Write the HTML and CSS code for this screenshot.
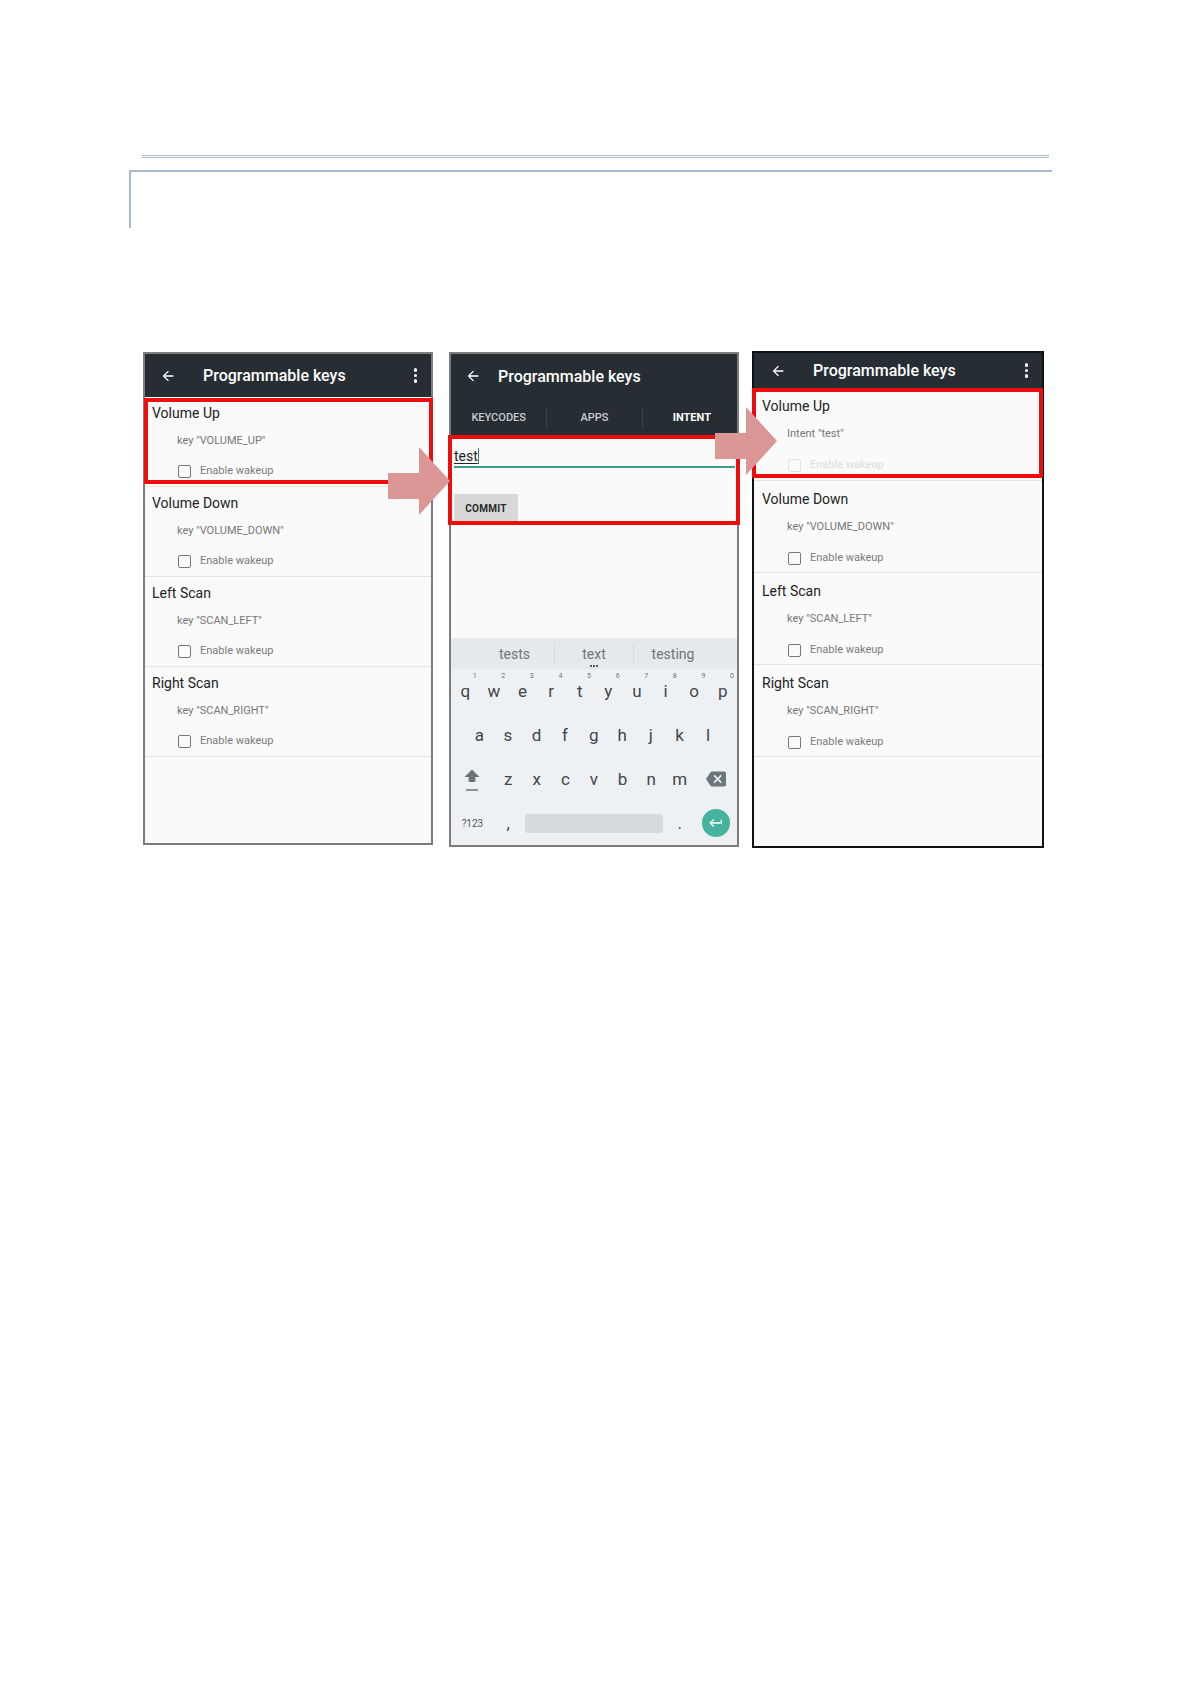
FILE: index.html
```html
<!DOCTYPE html>
<html lang="en">
<head>
    <meta charset="UTF-8">
    <meta name="viewport" content="width=device-width, initial-scale=1.0">
    <title>Programmable keys</title>
    <link rel="stylesheet" href="styles.css">
</head>
<body>
<div class="page">
    <div class="rule-double"></div>
    <div class="frame"></div>

    <div class="shots">
        <!-- screen 1: key list -->
        <div class="phone phone-a">
            <div class="appbar">
                <svg class="back" viewBox="0 0 24 24"><path d="M20 11H7.83l5.59-5.59L12 4l-8 8 8 8 1.41-1.41L7.83 13H20v-2z"/></svg>
                <span class="title">Programmable keys</span>
                <span class="kebab"><i></i><i></i><i></i></span>
            </div>
            <div class="item">
                <div class="item-title">Volume Up</div>
                <div class="item-sub">key "VOLUME_UP"</div>
                <div class="item-check"><span class="box"></span>Enable wakeup</div>
            </div>
            <div class="item">
                <div class="item-title">Volume Down</div>
                <div class="item-sub">key "VOLUME_DOWN"</div>
                <div class="item-check"><span class="box"></span>Enable wakeup</div>
            </div>
            <div class="item">
                <div class="item-title">Left Scan</div>
                <div class="item-sub">key "SCAN_LEFT"</div>
                <div class="item-check"><span class="box"></span>Enable wakeup</div>
            </div>
            <div class="item">
                <div class="item-title">Right Scan</div>
                <div class="item-sub">key "SCAN_RIGHT"</div>
                <div class="item-check"><span class="box"></span>Enable wakeup</div>
            </div>
        </div>

        <!-- screen 2: intent entry -->
        <div class="phone phone-b">
            <div class="appbar appbar-tall">
                <div class="appbar-row">
                    <svg class="back" viewBox="0 0 24 24"><path d="M20 11H7.83l5.59-5.59L12 4l-8 8 8 8 1.41-1.41L7.83 13H20v-2z"/></svg>
                    <span class="title">Programmable keys</span>
                </div>
                <div class="tabs">
                    <span class="tab">KEYCODES</span>
                    <span class="tab">APPS</span>
                    <span class="tab tab-on">INTENT</span>
                </div>
            </div>
            <div class="form">
                <div class="field"><span class="typed">test</span><span class="cursor"></span></div>
                <div class="commit">COMMIT</div>
            </div>
            <div class="keyboard">
                <div class="suggest">
                    <span>tests</span>
                    <span class="picked">text</span>
                    <span>testing</span>
                </div>
                <div class="krow krow-top">
                    <span class="key">q<sup>1</sup></span>
                    <span class="key">w<sup>2</sup></span>
                    <span class="key">e<sup>3</sup></span>
                    <span class="key">r<sup>4</sup></span>
                    <span class="key">t<sup>5</sup></span>
                    <span class="key">y<sup>6</sup></span>
                    <span class="key">u<sup>7</sup></span>
                    <span class="key">i<sup>8</sup></span>
                    <span class="key">o<sup>9</sup></span>
                    <span class="key">p<sup>0</sup></span>
                </div>
                <div class="krow krow-mid">
                    <span class="key">a</span>
                    <span class="key">s</span>
                    <span class="key">d</span>
                    <span class="key">f</span>
                    <span class="key">g</span>
                    <span class="key">h</span>
                    <span class="key">j</span>
                    <span class="key">k</span>
                    <span class="key">l</span>
                </div>
                <div class="krow krow-low">
                    <span class="key key-wide">
                        <span class="shift">
                            <svg viewBox="0 0 24 24"><path d="M12 3 3 12h5v6h8v-6h5z"/></svg>
                            <i></i>
                        </span>
                    </span>
                    <span class="key">z</span>
                    <span class="key">x</span>
                    <span class="key">c</span>
                    <span class="key">v</span>
                    <span class="key">b</span>
                    <span class="key">n</span>
                    <span class="key">m</span>
                    <span class="key key-wide">
                        <svg class="bksp" viewBox="0 0 24 24"><path d="M22 3H7c-.69 0-1.23.35-1.59.88L0 12l5.41 8.11c.36.53.9.89 1.59.89h15c1.1 0 2-.9 2-2V5c0-1.1-.9-2-2-2zm-3 12.59L17.59 17 14 13.41 10.41 17 9 15.59 12.59 12 9 8.41 10.41 7 14 10.59 17.59 7 19 8.41 15.41 12 19 15.59z"/></svg>
                    </span>
                </div>
                <div class="krow krow-bottom">
                    <span class="key key-wide sym">?123</span>
                    <span class="key">,</span>
                    <span class="key space"><span class="spacebar"></span></span>
                    <span class="key">.</span>
                    <span class="key key-wide">
                        <span class="enter">
                            <svg viewBox="0 0 24 24"><path d="M19 7v4H5.83l3.58-3.59L8 6l-6 6 6 6 1.41-1.41L5.83 13H21V7z"/></svg>
                        </span>
                    </span>
                </div>
            </div>
        </div>

        <!-- screen 3: result -->
        <div class="phone phone-c">
            <div class="appbar">
                <svg class="back" viewBox="0 0 24 24"><path d="M20 11H7.83l5.59-5.59L12 4l-8 8 8 8 1.41-1.41L7.83 13H20v-2z"/></svg>
                <span class="title">Programmable keys</span>
                <span class="kebab"><i></i><i></i><i></i></span>
            </div>
            <div class="item item-first">
                <div class="item-title">Volume Up</div>
                <div class="item-sub">Intent "test"</div>
                <div class="item-check item-off"><span class="box"></span>Enable wakeup</div>
            </div>
            <div class="item">
                <div class="item-title">Volume Down</div>
                <div class="item-sub">key "VOLUME_DOWN"</div>
                <div class="item-check"><span class="box"></span>Enable wakeup</div>
            </div>
            <div class="item">
                <div class="item-title">Left Scan</div>
                <div class="item-sub">key "SCAN_LEFT"</div>
                <div class="item-check"><span class="box"></span>Enable wakeup</div>
            </div>
            <div class="item">
                <div class="item-title">Right Scan</div>
                <div class="item-sub">key "SCAN_RIGHT"</div>
                <div class="item-check"><span class="box"></span>Enable wakeup</div>
            </div>
        </div>

        <!-- callouts drawn over the screenshots -->
        <div class="mark mark-a"></div>
        <div class="mark mark-b"></div>
        <div class="mark mark-c"></div>
        <svg class="arrow arrow-a" viewBox="0 0 62 68"><polygon points="0,26 31,26 31,0 62,34 31,68 31,52 0,52"/></svg>
        <svg class="arrow arrow-b" viewBox="0 0 62 68"><polygon points="0,26 31,26 31,0 62,34 31,68 31,52 0,52"/></svg>
    </div>
</div>
</body>
</html>
```

FILE: styles.css
```css
body {
    margin: 0;
    background: #ffffff;
    font-family: Roboto, "Noto Sans", Arial, sans-serif;
}
.page {
    width: 1191px;
    height: 1683px;
    padding-top: 155px;
    box-sizing: border-box;
}
.rule-double {
    margin-left: 142px;
    width: 907px;
    height: 1px;
    border-top: 1px solid #a9bccf;
    border-bottom: 1px solid #a9bccf;
}
.frame {
    margin: 12px 0 0 129px;
    width: 921px;
    height: 56px;
    border-top: 2px solid #a6b9cf;
    border-left: 2px solid #a6b9cf;
}
.shots {
    position: relative;
    margin-top: 124px;
    padding-left: 143px;
    display: flex;
    align-items: flex-start;
    gap: 16px;
}

/* phone frames */
.phone {
    box-sizing: border-box;
    width: 290px;
    border: 2px solid #7c7c7c;
    background: #fafafa;
    display: flex;
    flex-direction: column;
    overflow: hidden;
}
.phone-a {
    height: 493px;
}
.phone-b {
    height: 495px;
}
.phone-c {
    width: 292px;
    height: 497px;
    margin-top: -1px;
    margin-left: -3px;
    border-color: #111111;
}

.appbar {
    height: 43px;
    flex: none;
    background: #262e33;
    display: flex;
    align-items: center;
    padding: 0 14px 0 15px;
    color: #ffffff;
}
.back {
    width: 16px;
    height: 16px;
    fill: #ffffff;
    flex: none;
}
.title {
    margin-left: 27px;
    font-size: 16px;
    font-weight: 500;
}
.kebab {
    margin-left: auto;
    display: flex;
    flex-direction: column;
    gap: 2px;
}
.kebab i {
    width: 3.5px;
    height: 3.5px;
    border-radius: 50%;
    background: #ffffff;
}
.phone-c .appbar {
    height: 35px;
    padding-left: 16px;
}

/* list rows */
.item {
    box-sizing: border-box;
    height: 90px;
    flex: none;
    padding: 6px 0 0 7px;
    border-bottom: 1px solid #e4e4e4;
}
.phone-c .item {
    height: 92px;
    padding: 8px 0 0 8px;
}
.phone-c .item-first {
    height: 93px;
}
.item-title {
    font-size: 14px;
    line-height: 20px;
    color: #222222;
}
.item-sub {
    margin: 8px 0 0 25px;
    font-size: 11px;
    line-height: 20px;
    color: #777777;
}
.item-check {
    margin: 10px 0 0 26px;
    display: flex;
    align-items: center;
    gap: 9px;
    font-size: 11px;
    line-height: 20px;
    color: #7a7a7a;
}
.phone-c .item-check {
    margin-top: 11px;
}
.box {
    box-sizing: border-box;
    width: 13px;
    height: 13px;
    border: 1.5px solid #777777;
    border-radius: 2px;
}
.item-off {
    color: #dcdcdc;
}
.item-off .box {
    border-color: #e2e2e2;
}

/* screen 2 */
.appbar-tall {
    height: 83px;
    flex-direction: column;
    align-items: stretch;
    padding: 0;
}
.appbar-row {
    height: 44px;
    display: flex;
    align-items: center;
    padding-left: 14px;
}
.appbar-row .title {
    margin-left: 17px;
}
.tabs {
    height: 39px;
    display: grid;
    grid-template-columns: repeat(3, 1fr);
    align-items: center;
}
.tab {
    text-align: center;
    font-size: 11px;
    font-weight: 500;
    color: #c6ccd0;
    border-left: 1px solid #3b4449;
    line-height: 22px;
}
.tab:first-child {
    border-left: none;
}
.tab-on {
    color: #ffffff;
    font-weight: 700;
    padding-left: 4px;
}
.form {
    flex: 1;
    padding: 10px 2px 0 3px;
}
.field {
    display: flex;
    align-items: center;
    height: 18px;
    border-bottom: 2px solid #3e9a89;
    padding-bottom: 1px;
    font-size: 14px;
    color: #222222;
}
.typed {
    text-decoration: underline;
    text-decoration-thickness: 1px;
    text-underline-offset: 2px;
}
.cursor {
    width: 1.5px;
    height: 16px;
    background: #2b8a78;
}
.commit {
    margin-top: 26px;
    width: 64px;
    height: 28px;
    background: #d8d8d8;
    font-size: 10px;
    font-weight: 700;
    letter-spacing: 0.3px;
    color: #2a2a2a;
    display: flex;
    align-items: center;
    justify-content: center;
}

/* keyboard */
.keyboard {
    flex: none;
    background: #eef1f3;
    color: #3f474b;
}
.suggest {
    height: 31px;
    background: #e6e9eb;
    display: grid;
    grid-template-columns: repeat(3, 79px);
    padding-left: 24px;
    align-items: center;
    font-size: 14px;
    color: #6f7578;
}
.suggest span {
    position: relative;
    text-align: center;
    border-left: 1px solid #d6dadd;
    line-height: 20px;
}
.suggest span:first-child {
    border-left: none;
}
.picked::after {
    content: "";
    position: absolute;
    left: 50%;
    bottom: -3px;
    width: 2px;
    height: 2px;
    margin-left: -1px;
    background: #555c60;
    box-shadow: -3px 0 0 #555c60, 3px 0 0 #555c60;
}
.krow {
    height: 44px;
    display: grid;
    align-items: center;
    font-size: 17px;
}
.krow-top {
    grid-template-columns: repeat(10, 1fr);
}
.krow-mid {
    grid-template-columns: repeat(9, 28.6px);
    padding-left: 14px;
}
.krow-low {
    grid-template-columns: 42.9px repeat(7, 28.6px) 1fr;
}
.krow-bottom {
    grid-template-columns: 42.9px 28.6px 143px 28.6px 1fr;
}
.key {
    position: relative;
    display: flex;
    justify-content: center;
    align-items: center;
    height: 100%;
}
.key sup {
    position: absolute;
    top: 3px;
    right: 3px;
    font-size: 7px;
    line-height: 8px;
    color: #6b7376;
}
.shift {
    display: flex;
    flex-direction: column;
    align-items: center;
}
.shift svg {
    width: 20px;
    height: 20px;
    fill: #6a767b;
}
.shift i {
    width: 12px;
    height: 1.5px;
    margin-top: 2px;
    background: #8a9397;
}
.bksp {
    width: 20px;
    height: 20px;
    fill: #6a767b;
}
.sym {
    font-size: 10px;
    color: #52595c;
}
.spacebar {
    width: 138px;
    height: 19px;
    border-radius: 3px;
    background: #d6dadd;
}
.enter {
    width: 28px;
    height: 28px;
    border-radius: 50%;
    background: #45b39d;
    display: flex;
    align-items: center;
    justify-content: center;
}
.enter svg {
    width: 16px;
    height: 16px;
    fill: #ffffff;
}

/* red callout boxes and arrows */
.mark {
    position: absolute;
    box-sizing: border-box;
    border: 4px solid #ee0d0d;
}
.mark-a {
    left: 144px;
    top: 46px;
    width: 289px;
    height: 86px;
}
.mark-b {
    left: 448px;
    top: 83px;
    width: 292px;
    height: 90px;
}
.mark-c {
    left: 752px;
    top: 36px;
    width: 291px;
    height: 90px;
}
.arrow {
    position: absolute;
    width: 62px;
    height: 68px;
    fill: #db9696;
}
.arrow-a {
    left: 388px;
    top: 95px;
}
.arrow-b {
    left: 715px;
    top: 55px;
}
```
